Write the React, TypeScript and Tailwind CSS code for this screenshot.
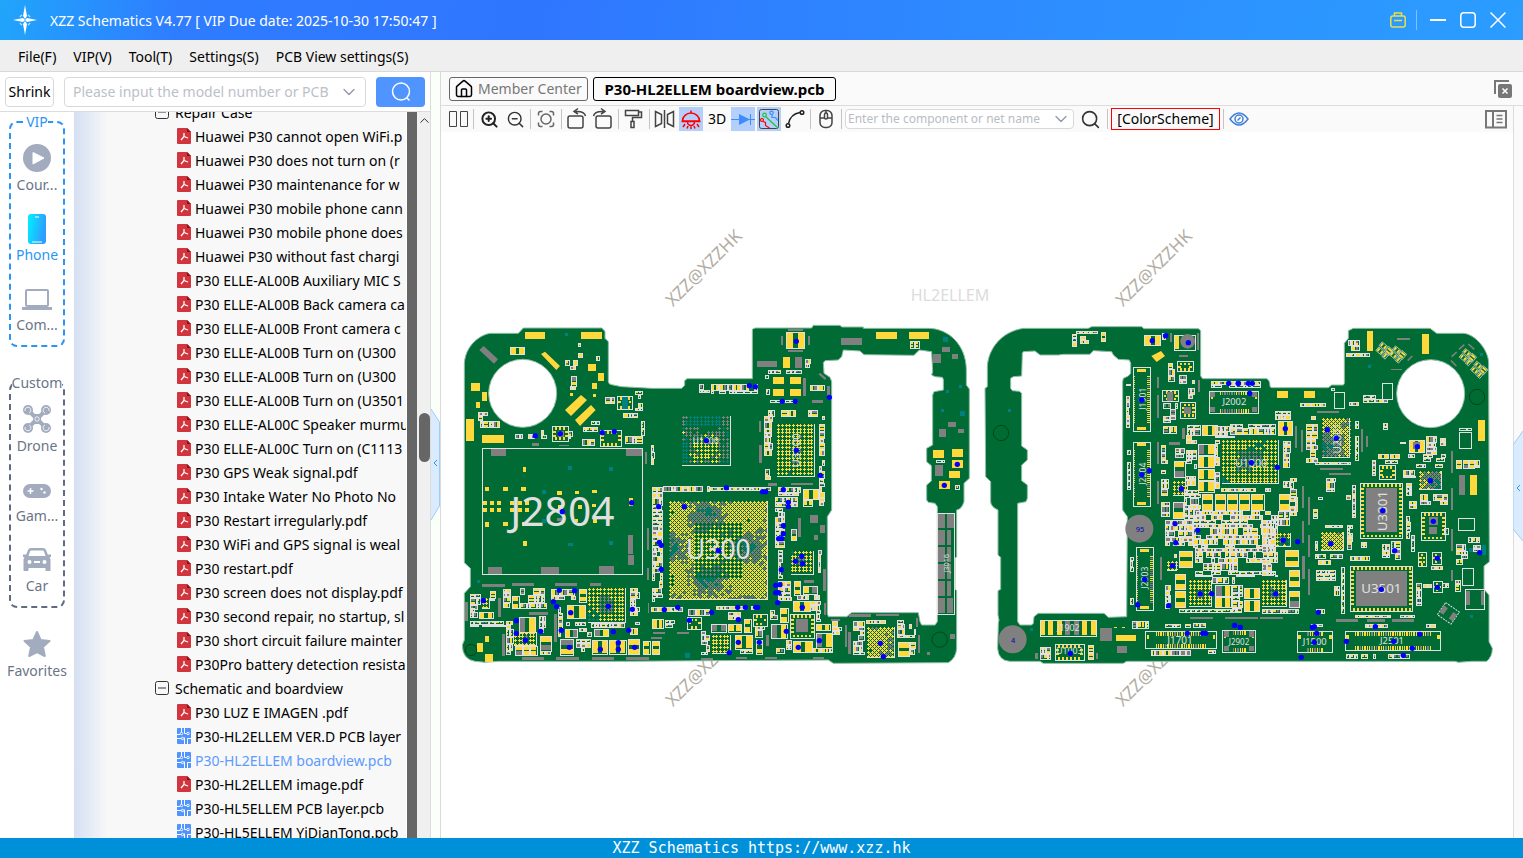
import { ReactNode } from "react";
import { ChevronDown, ChevronUp, House, Search, ZoomIn, ZoomOut } from "lucide-react";

const MENUS = ["File(F)", "VIP(V)", "Tool(T)", "Settings(S)", "PCB View settings(S)"];

const REPAIR_FILES = [
  "Huawei P30 cannot open WiFi.p",
  "Huawei P30 does not turn on (r",
  "Huawei P30 maintenance for w",
  "Huawei P30 mobile phone cann",
  "Huawei P30 mobile phone does",
  "Huawei P30 without fast chargi",
  "P30 ELLE-AL00B Auxiliary MIC S",
  "P30 ELLE-AL00B Back camera ca",
  "P30 ELLE-AL00B Front camera c",
  "P30 ELLE-AL00B Turn on (U300",
  "P30 ELLE-AL00B Turn on (U300",
  "P30 ELLE-AL00B Turn on (U3501",
  "P30 ELLE-AL00C Speaker murmu",
  "P30 ELLE-AL00C Turn on (C1113",
  "P30 GPS Weak signal.pdf",
  "P30 Intake Water No Photo No",
  "P30 Restart irregularly.pdf",
  "P30 WiFi and GPS signal is weal",
  "P30 restart.pdf",
  "P30 screen does not display.pdf",
  "P30 second repair, no startup, sl",
  "P30 short circuit failure mainter",
  "P30Pro battery detection resista",
];

const BOARD_FILES = [
  { name: "P30 LUZ E IMAGEN .pdf", type: "pdf" },
  { name: "P30-HL2ELLEM VER.D PCB layer", type: "pcb" },
  { name: "P30-HL2ELLEM boardview.pcb", type: "pcb" },
  { name: "P30-HL2ELLEM image.pdf", type: "pdf" },
  { name: "P30-HL5ELLEM PCB layer.pcb", type: "pcb" },
  { name: "P30-HL5ELLEM YiDianTong.pcb", type: "pcb" },
];

const ACTIVE_FILE = "P30-HL2ELLEM boardview.pcb";

/* ---------- icons ---------- */

function Logo() {
  return (
    <svg viewBox="0 0 26 30" className="h-[30px] w-[26px]" fill="#fff">
      <path d="M13 0l2 11-2 3-2-3zM13 30l2-11-2-3-2 3zM1 15l10-2 2 2-2 2zM25 15l-10-2-2 2 2 2z" />
      <g fill="none" stroke="#bfe3ff" strokeWidth="1.4">
        <path d="M8 12a6 6 0 0 1 2-2M16 10a6 6 0 0 1 2 2M18 18a6 6 0 0 1-2 2M10 20a6 6 0 0 1-2-2" />
      </g>
    </svg>
  );
}

function PdfIcon() {
  return (
    <svg viewBox="0 0 14 16" className="h-4 w-3.5 shrink-0">
      <path d="M1 0h9l4 4v11a1 1 0 0 1-1 1H1a1 1 0 0 1-1-1V1a1 1 0 0 1 1-1z" fill="#d2353e" />
      <path d="M10 0l4 4h-4z" fill="#8f1019" />
      <path d="M7 5v3.500L4 12M7 8.500L11 10" fill="none" stroke="#fff" strokeWidth="1.300" />
    </svg>
  );
}

function PcbIcon() {
  return (
    <svg viewBox="0 0 14 16" className="h-4 w-3.5 shrink-0">
      <rect width="14" height="16" rx="1" fill="#4f94ff" />
      <g fill="none" stroke="#fff" strokeWidth="1">
        <path d="M4.500 0v4M7.500 0v5.500h2M0 6.500h3M0 10.500h4.500M7.500 16v-6.500M10.500 16v-5.500h3.500" />
        <circle cx="4.500" cy="5.500" r="1.200" />
        <circle cx="11" cy="5.500" r="1.200" />
        <circle cx="5.500" cy="10.500" r="1.200" />
      </g>
    </svg>
  );
}

function CourseIcon() {
  return (
    <svg viewBox="0 0 28 28" className="size-7">
      <circle cx="14" cy="14" r="14" fill="#a3abbf" />
      <path d="M10 8.500l11 5.500-11 6z" fill="#fff" stroke="#fff" strokeLinejoin="round" />
    </svg>
  );
}

function PhoneIcon() {
  return (
    <svg viewBox="0 0 28 32" className="h-8 w-7">
      <defs>
        <linearGradient id="phone" x1="0" y1="0" x2="1" y2="0.3">
          <stop offset="0" stopColor="#00f2ff" />
          <stop offset="1" stopColor="#2f9cff" />
        </linearGradient>
      </defs>
      <rect x="5" y="2" width="18" height="30" rx="3" fill="url(#phone)" />
      <path d="M12 5h4M9 30h10" stroke="#fff" strokeWidth="1" />
    </svg>
  );
}

function LaptopIcon() {
  return (
    <svg viewBox="0 0 30 28" className="h-7 w-[30px]" fill="none" stroke="#a3abbf">
      <rect x="4" y="6" width="22" height="16" rx="1" strokeWidth="2" />
      <path d="M0 24.500h30" strokeWidth="3" />
    </svg>
  );
}

function DroneIcon() {
  return (
    <svg viewBox="0 0 28 28" className="size-7">
      <g fill="#a3abbf">
        <circle cx="5" cy="5" r="5" />
        <circle cx="23" cy="5" r="5" />
        <circle cx="5" cy="23" r="5" />
        <circle cx="23" cy="23" r="5" />
        <rect x="10" y="9" width="8" height="10" rx="2" />
      </g>
      <path d="M5 5l18 18M23 5L5 23" stroke="#a3abbf" strokeWidth="4" />
      <g fill="none" stroke="#fff" strokeWidth="0.8">
        <path d="M2 6a3 3 0 1 1 4 2M26 6a3 3 0 1 0-4 2M2 22a3 3 0 1 0 4-2M26 22a3 3 0 1 1-4-2" />
        <circle cx="14" cy="14" r="2.200" />
      </g>
    </svg>
  );
}

function GameIcon() {
  return (
    <svg viewBox="0 0 28 28" className="size-7">
      <rect y="9" width="28" height="14" rx="7" fill="#a3abbf" />
      <path d="M4.500 16h6M7.500 13v6" stroke="#fff" strokeWidth="1.500" />
      <circle cx="18.500" cy="14" r="1.200" fill="#fff" />
      <circle cx="21.500" cy="17.500" r="1.200" fill="#fff" />
    </svg>
  );
}

function CarIcon() {
  return (
    <svg viewBox="0 0 28 28" className="size-7">
      <path
        fillRule="evenodd"
        fill="#a3abbf"
        d="M8 3h12c1.500 0 2.500.8 3 2l1.800 4.500H28V12h-1.500c.8 1 1 2 1 3v10c0 .6-.4 1-1 1h-3c-.6 0-1-.4-1-1v-2h-17v2c0 .6-.4 1-1 1h-3c-.6 0-1-.4-1-1V15c0-1 .2-2 1-3H0V9.500h3.200L5 5c.5-1.200 1.500-2 3-2zm.5 2.500c-.8 0-1.200.4-1.500 1L5.500 11h17L21 6.500c-.3-.6-.7-1-1.500-1zM6.500 15a2 2 0 1 0 0 4 2 2 0 0 0 0-4zm15 0a2 2 0 1 0 0 4 2 2 0 0 0 0-4zM11 16v2h6v-2z"
      />
    </svg>
  );
}

function StarIcon() {
  return (
    <svg viewBox="0 0 28 28" className="size-7">
      <path
        d="M14 2l3.600 8 8.900 1-6.600 5.900 1.900 9.100L14 22l-7.800 4 1.900-9.100L1.500 11l8.900-1z"
        fill="#a3abbf"
        stroke="#a3abbf"
        strokeWidth="2"
        strokeLinejoin="round"
      />
    </svg>
  );
}

function Glyph({ children, color = "#444" }: { children: ReactNode; color?: string }) {
  return (
    <svg viewBox="0 0 24 24" className="size-6" fill="none" stroke={color} strokeWidth="1.500">
      {children}
    </svg>
  );
}

/* ---------- board drawing ---------- */

type Rect = [number, number, number, number];
type Point = [number, number];

type Tile = {
  x: number;
  yellow: Rect[];
  gray: Rect[];
  teal: Rect[];
  boxes: Rect[];
  parts: Rect[];
  rings: Rect[];
  connectors: Rect[];
  clusters: Rect[];
  bgas: [number, number, number, number, number][];
  dots: Point[];
};

const LEFT_OUTLINE =
  "M28 130C32 75 75 45 105 40H190L205 24H440L450 34V55L460 65V185Q461 193 470 194L500 200 590 205H680L689 196V182L696 176H892V28L900 24H1070L1075 16H1155L1160 21H1225V25H1420C1480 25 1534 75 1534 150V195L1543 207V475L1527 490V545Q1520 568 1505 570V710L1500 715V808L1505 812V985Q1503 1015 1480 1028L1135 1030 1120 1020 765 1022 500 1024H130L90 1027 60 1024Q22 1018 22 975L28 960V820L46 800V745L28 728Z";
const LEFT_WINDOW =
  "M1165 90L1215 93 1227 104 1377 106 1393 90 1430 95 1433 155 1430 165 1440 170 1462 172 1465 178V210L1437 215 1433 225V375L1415 385V425L1429 437V483L1415 495V540L1420 547 1440 550 1447 560V905L1440 915H1400L1395 905 1390 878H1190L1175 890H1120L1117 880V590L1130 570V185L1125 172 1107 160 1105 128 1110 122 1150 120 1160 110Z";
const RIGHT_OUTLINE =
  "M1597 200V140C1600 85 1640 35 1705 25H1900L1910 20H2060L2067 26H2230L2237 32V168L2243 176H2435Q2445 180 2445 200L2450 203H2620L2630 195H2665L2668 190V70L2680 55V32L2695 25H2925L2945 40H3025C3060 42 3101 90 3101 130L3103 725 3087 738V808L3102 825V965L3112 985Q3112 1010 3095 1024H3050L3010 1027 3000 1024H2015L2005 1030H1765L1755 1024H1665Q1630 1022 1628 985L1630 910 1632 900 1629 885V812L1637 808V712L1629 705V570Q1607 560 1607 545V485L1592 470 1590 205Z";
const RIGHT_WINDOW =
  "M1705 95L1740 93 1755 105H1810L1825 103H1905L1915 92 1970 95 1975 105 1990 118 2023 120 2027 130V160L2020 168 2005 175 2003 185V570L2017 590 2015 890 1960 892 1947 880H1750L1737 890 1735 910 1730 915H1695L1688 905V550L1713 545 1717 535V495L1700 482V435L1717 420V390L1700 378V220L1693 214 1672 212 1667 205V175L1675 170 1700 168 1702 100Z";

const TILES: Tile[] = [
  {
    x: 0,
    yellow: [
      [210, 36, 60, 21], [378, 36, 63, 21], [48, 188, 27, 25], [81, 216, 15, 27], [63, 246, 12, 18],
      [33, 297, 24, 66], [81, 345, 66, 24], [399, 132, 24, 21], [429, 159, 18, 24], [411, 189, 15, 18],
      [204, 441, 9, 15], [90, 501, 12, 12], [144, 501, 15, 12], [198, 500, 15, 13], [82, 543, 14, 12],
      [105, 543, 12, 12], [126, 543, 12, 12], [165, 543, 12, 12], [188, 543, 12, 12], [210, 543, 12, 12],
      [82, 564, 14, 12], [105, 564, 12, 12], [126, 564, 12, 12], [165, 564, 12, 12], [188, 564, 12, 12],
      [210, 564, 12, 12], [90, 606, 12, 15], [144, 606, 15, 12], [200, 606, 12, 12], [306, 513, 15, 12],
      [360, 513, 12, 9], [411, 510, 15, 9], [308, 555, 14, 12], [369, 555, 12, 12], [411, 552, 12, 9],
      [414, 597, 12, 12], [360, 597, 10, 10], [522, 534, 12, 24], [204, 663, 12, 15], [90, 948, 12, 18],
      [66, 969, 18, 27], [90, 1002, 24, 24], [345, 219, 9, 9], [414, 222, 9, 9],
    ],
    gray: [
      [108, 385, 45, 23], [513, 385, 48, 23], [99, 741, 42, 21], [258, 741, 54, 21], [432, 738, 45, 24],
      [519, 645, 15, 57], [519, 705, 18, 30], [306, 594, 15, 9], [231, 369, 21, 9], [312, 375, 30, 3],
      [570, 396, 6, 36], [576, 624, 6, 66], [576, 744, 6, 36], [81, 792, 69, 9], [171, 789, 66, 9],
      [300, 789, 66, 9], [405, 789, 33, 9], [30, 846, 9, 57], [129, 834, 9, 57], [222, 876, 57, 9],
      [297, 882, 9, 84], [141, 942, 9, 66], [201, 1011, 66, 9], [303, 1011, 69, 9], [411, 1011, 66, 9],
      [513, 1011, 69, 9], [594, 936, 36, 6], [666, 936, 36, 6], [588, 951, 33, 6], [738, 1014, 36, 6],
      [579, 849, 3, 30], [309, 333, 18, 18],
    ],
    teal: [
      [339, 438, 12, 12], [462, 441, 12, 12], [261, 510, 12, 12], [261, 597, 12, 12], [462, 663, 12, 12],
      [339, 669, 15, 9], [501, 231, 18, 36], [66, 780, 9, 9], [690, 999, 15, 15], [331, 40, 7, 7],
    ],
    boxes: [[82, 385, 481, 379]],
    parts: [
      [166, 82, 42, 22], [337, 856, 55, 40], [192, 892, 50, 45], [255, 948, 35, 45], [315, 957, 40, 48],
      [413, 960, 45, 42], [463, 960, 50, 42], [521, 958, 33, 45], [565, 963, 20, 40], [592, 963, 22, 40],
      [592, 898, 32, 27], [350, 170, 15, 28], [72, 877, 42, 18], [172, 828, 20, 38], [372, 808, 22, 38],
      [330, 928, 38, 24], [418, 928, 42, 22], [182, 978, 20, 28], [204, 978, 20, 28], [226, 978, 20, 28],
    ],
    rings: [[291, 319, 50, 44], [487, 229, 45, 40], [436, 330, 64, 50], [698, 893, 42, 36]],
    connectors: [],
    clusters: [
      [330, 122, 40, 32], [370, 70, 16, 48], [385, 108, 50, 18], [345, 200, 22, 12], [70, 277, 30, 28],
      [75, 303, 62, 30], [180, 342, 62, 22], [258, 330, 18, 34], [340, 335, 14, 24], [450, 232, 32, 34],
      [540, 213, 24, 62], [505, 280, 45, 16], [558, 305, 12, 45], [385, 322, 45, 14], [382, 357, 45, 24],
      [510, 350, 60, 26], [588, 375, 12, 65], [408, 303, 28, 12], [707, 193, 60, 28], [141, 100, 20, 9],
      [46, 822, 32, 50], [45, 865, 24, 32], [105, 815, 20, 30], [47, 903, 106, 20], [145, 808, 24, 62],
      [196, 805, 82, 50], [196, 850, 82, 22], [290, 808, 75, 40], [525, 805, 30, 112], [310, 850, 16, 110],
      [335, 906, 60, 12], [410, 910, 100, 16], [155, 905, 22, 100], [254, 890, 24, 50], [365, 957, 45, 44],
      [372, 925, 40, 26], [525, 925, 28, 22], [592, 502, 34, 350], [626, 500, 140, 20], [590, 862, 100, 16],
      [630, 900, 32, 28], [700, 868, 66, 22], [740, 935, 26, 70], [255, 993, 35, 14],
    ],
    bgas: [[680, 288, 147, 148, 0], [641, 543, 296, 295, 2], [400, 805, 112, 103, 1], [177, 935, 67, 40, 1], [80, 835, 24, 30, 1]],
    dots: [
      [241, 347], [316, 341], [442, 338], [478, 335], [322, 575], [530, 548], [85, 842], [313, 811], [359, 812],
      [295, 845], [305, 860], [347, 878], [460, 859], [532, 868], [184, 902], [184, 940], [211, 961], [257, 934],
      [319, 931], [343, 982], [475, 935], [521, 931], [436, 988], [490, 968], [490, 988], [539, 982], [611, 560],
      [688, 560], [613, 667], [619, 676], [619, 748], [628, 869], [668, 862], [703, 901], [754, 362],
    ],
  },
  {
    x: 765,
    yellow: [
      [498, 36, 63, 21], [597, 36, 60, 21], [219, 111, 21, 33], [189, 171, 33, 21], [240, 171, 33, 21],
      [189, 207, 33, 21], [240, 207, 33, 21], [669, 390, 33, 24], [726, 387, 33, 24], [726, 420, 33, 24],
      [717, 453, 33, 21], [687, 483, 33, 24],
    ],
    gray: [
      [141, 123, 60, 18], [254, 111, 21, 33], [393, 54, 63, 20], [234, 28, 45, 5], [234, 90, 45, 5],
      [213, 48, 5, 26], [295, 48, 5, 26], [696, 81, 24, 15], [669, 102, 24, 27], [726, 102, 18, 15],
      [714, 306, 24, 15], [687, 327, 21, 24], [744, 327, 18, 12], [675, 435, 24, 33], [279, 174, 9, 54],
      [351, 198, 9, 39], [306, 240, 33, 9], [147, 303, 6, 33], [147, 375, 9, 54], [174, 489, 27, 9],
      [243, 489, 66, 6], [300, 585, 24, 24], [330, 615, 15, 24], [312, 645, 12, 15], [264, 594, 9, 57],
      [339, 747, 9, 66], [282, 780, 30, 9], [342, 849, 6, 36], [417, 882, 66, 9], [498, 882, 69, 6],
      [414, 936, 9, 66], [405, 915, 6, 66], [168, 945, 9, 33], [363, 897, 27, 6], [618, 894, 6, 27],
      [624, 945, 6, 54], [165, 1011, 36, 6], [78, 1011, 33, 6], [309, 1011, 33, 6], [258, 897, 37, 38],
      [682, 580, 24, 45], [711, 580, 20, 45], [682, 629, 24, 46], [711, 629, 12, 46], [682, 681, 24, 46],
      [711, 681, 12, 46], [682, 731, 24, 46], [711, 731, 12, 46], [682, 783, 24, 46], [711, 783, 12, 46],
      [682, 834, 24, 45], [711, 834, 18, 45], [720, 942, 15, 15], [651, 996, 9, 9],
    ],
    teal: [[699, 51, 15, 15], [749, 272, 16, 16], [748, 196, 8, 8], [694, 268, 7, 7], [709, 211, 7, 7]],
    boxes: [[681, 579, 53, 305]],
    parts: [
      [228, 38, 56, 48], [280, 507, 46, 32], [75, 946, 53, 41], [183, 913, 48, 42], [250, 965, 58, 32],
      [318, 940, 50, 44], [564, 966, 35, 44], [252, 785, 20, 40], [280, 800, 42, 22], [250, 845, 52, 30],
      [5, 912, 45, 24], [55, 912, 40, 24], [103, 897, 20, 40], [280, 542, 28, 16], [212, 865, 22, 42],
      [320, 912, 40, 20], [245, 627, 14, 34], [138, 960, 20, 42],
    ],
    rings: [[241, 883, 73, 72], [130, 883, 42, 36]],
    connectors: [],
    clusters: [
      [4, 192, 140, 30], [175, 152, 102, 10], [285, 117, 22, 28], [165, 165, 12, 14], [170, 208, 14, 20],
      [300, 197, 45, 22], [180, 240, 90, 9], [175, 270, 155, 28], [163, 290, 28, 120], [328, 290, 18, 270],
      [165, 448, 22, 34], [0, 502, 185, 18], [204, 502, 70, 28], [196, 532, 70, 30], [196, 564, 30, 124],
      [205, 690, 16, 90], [204, 785, 44, 60], [248, 825, 84, 22], [300, 845, 34, 34], [180, 870, 28, 30],
      [320, 870, 14, 36], [366, 905, 30, 72], [20, 860, 130, 14], [55, 878, 40, 24], [430, 905, 36, 100],
      [470, 900, 90, 14], [562, 900, 58, 56], [600, 967, 20, 45], [600, 65, 30, 22], [735, 485, 20, 25],
      [325, 690, 12, 70], [135, 920, 32, 36], [200, 985, 30, 18], [310, 985, 60, 16], [90, 990, 40, 12],
      [228, 960, 20, 30], [678, 421, 28, 8],
    ],
    bgas: [[202, 312, 112, 157, 1], [242, 693, 69, 70, 1], [470, 922, 83, 90, 3], [5, 945, 57, 55, 1]],
    dots: [
      [118, 197], [136, 200], [259, 64], [358, 232], [217, 244], [256, 244], [259, 391], [331, 466], [49, 503],
      [158, 515], [167, 515], [220, 509], [235, 547], [235, 560], [220, 617], [220, 641], [206, 656], [215, 656],
      [25, 692], [275, 709], [256, 724], [278, 731], [214, 749], [197, 796], [210, 794], [197, 818], [206, 818],
      [203, 848], [277, 862], [83, 862], [106, 862], [137, 862], [143, 862], [5, 877], [85, 899], [229, 934],
      [85, 967], [148, 967], [58, 998], [265, 982], [328, 962], [511, 970], [520, 1010], [742, 433], [703, 496],
    ],
  },
  {
    x: 1575,
    yellow: [
      [408, 945, 60, 18], [183, 903, 12, 43], [204, 903, 14, 43], [232, 903, 14, 43], [306, 903, 14, 43],
      [333, 903, 14, 43], [585, 48, 12, 40], [402, 920, 8, 5], [427, 920, 8, 5],
    ],
    gray: [
      [360, 924, 36, 39], [411, 978, 30, 21], [256, 903, 14, 43], [282, 903, 14, 43], [570, 40, 6, 26],
      [597, 105, 27, 6], [651, 40, 6, 50], [531, 171, 6, 33], [531, 225, 6, 69], [531, 366, 6, 66],
      [531, 483, 6, 69], [540, 711, 6, 69], [567, 366, 33, 9], [606, 324, 9, 33], [654, 180, 6, 36],
      [630, 891, 69, 6], [735, 891, 100, 6], [165, 999, 9, 18], [348, 999, 6, 18], [560, 216, 20, 28],
      [612, 261, 21, 21], [691, 216, 15, 15], [691, 262, 15, 15], [815, 216, 15, 15], [815, 262, 15, 15],
      [731, 934, 16, 16], [731, 978, 16, 16], [806, 934, 16, 16], [806, 978, 16, 16],
    ],
    teal: [[84, 267, 9, 9], [150, 925, 8, 8]],
    boxes: [[180, 900, 170, 49], [583, 46, 62, 45]],
    parts: [
      [668, 317, 45, 30], [655, 372, 48, 33], [655, 410, 48, 33], [655, 447, 48, 33], [655, 483, 48, 33],
      [584, 423, 31, 50], [581, 547, 30, 48], [598, 693, 40, 50], [586, 763, 31, 45], [586, 815, 31, 48],
      [667, 523, 30, 48], [706, 523, 30, 48], [742, 523, 30, 48], [707, 797, 46, 32], [707, 831, 46, 32],
      [494, 47, 48, 29], [778, 523, 30, 48], [814, 523, 38, 48], [363, 37, 14, 28],
    ],
    rings: [[548, 210, 48, 34], [602, 248, 45, 46], [592, 125, 47, 30], [226, 973, 86, 49]],
    connectors: [
      [460, 143, 51, 191], [460, 367, 51, 192], [469, 683, 51, 188], [497, 934, 212, 52], [689, 213, 146, 67],
      [728, 931, 98, 67],
    ],
    clusters: [
      [277, 42, 16, 42], [290, 33, 70, 10], [300, 50, 28, 30], [440, 180, 14, 20], [438, 230, 14, 96],
      [441, 390, 12, 16], [441, 428, 12, 82], [450, 712, 12, 44], [450, 836, 12, 20], [548, 40, 14, 30],
      [565, 130, 22, 62], [597, 165, 50, 35], [625, 205, 22, 34], [550, 250, 45, 60], [550, 320, 42, 24],
      [623, 315, 40, 34], [618, 345, 35, 110], [705, 320, 60, 36], [545, 365, 22, 165], [587, 385, 30, 30],
      [705, 360, 16, 150], [615, 470, 35, 30], [612, 510, 52, 90], [545, 547, 30, 50], [640, 575, 255, 26],
      [640, 600, 255, 26], [640, 625, 255, 60], [645, 685, 250, 88], [555, 600, 85, 80], [458, 905, 55, 26],
      [535, 912, 100, 12], [640, 910, 40, 14], [515, 992, 120, 20], [640, 992, 70, 10], [557, 797, 18, 70],
      [598, 867, 170, 18], [697, 772, 70, 20], [693, 184, 150, 20], [180, 982, 35, 38], [325, 977, 18, 48],
      [725, 505, 150, 12], [557, 702, 36, 14], [757, 797, 34, 84],
    ],
    bgas: [[580, 483, 43, 43, 1], [628, 780, 67, 80, 1], [727, 360, 168, 130, 1], [562, 722, 28, 28, 1]],
    dots: [
      [517, 62], [557, 47], [625, 68], [485, 240], [485, 464], [508, 452], [604, 506], [585, 611], [653, 631],
      [587, 668], [578, 737], [494, 778], [473, 854], [566, 857], [661, 821], [695, 821], [746, 190], [775, 190],
      [622, 940], [668, 940], [677, 940], [271, 1000], [764, 916], [781, 922],
    ],
  },
  {
    x: 2325,
    yellow: [
      [411, 33, 18, 60], [576, 42, 21, 60], [744, 300, 21, 63], [141, 213, 33, 21], [222, 213, 33, 21],
      [720, 465, 21, 60],
    ],
    gray: [
      [408, 504, 93, 132], [378, 753, 153, 105], [687, 465, 18, 60], [597, 592, 26, 22], [597, 622, 24, 20],
      [501, 54, 39, 5], [483, 147, 33, 4], [195, 318, 6, 66], [213, 330, 6, 66], [261, 273, 66, 6],
      [270, 444, 69, 6], [297, 459, 66, 6], [393, 327, 6, 69], [408, 348, 6, 33], [663, 393, 6, 66],
      [663, 504, 6, 66], [663, 627, 6, 66], [663, 750, 6, 33], [216, 498, 6, 66], [234, 531, 6, 84],
      [216, 603, 6, 66], [216, 708, 9, 69], [234, 645, 6, 66], [234, 747, 6, 78], [318, 897, 66, 9],
      [411, 897, 54, 9], [486, 897, 66, 9], [90, 891, 69, 6], [709, 812, 10, 42], [752, 812, 10, 42],
      [550, 365, 20, 22],
    ],
    teal: [[414, 135, 10, 10], [700, 683, 12, 12], [718, 683, 12, 14], [757, 676, 12, 28], [720, 885, 9, 9], [750, 100, 8, 8]],
    boxes: [[313, 217, 30, 48], [457, 190, 30, 48], [687, 336, 38, 50], [685, 595, 48, 36], [697, 745, 33, 50], [706, 808, 58, 60]],
    parts: [
      [148, 523, 30, 48], [167, 692, 38, 48], [178, 752, 30, 48], [178, 813, 30, 50], [43, 806, 46, 30],
      [43, 842, 46, 33], [145, 305, 42, 42], [445, 402, 30, 14], [480, 402, 28, 14], [680, 422, 15, 24],
      [700, 422, 15, 24], [717, 422, 16, 24], [537, 360, 46, 38],
    ],
    rings: [
      [390, 490, 128, 165], [360, 739, 188, 136], [574, 577, 73, 84], [447, 436, 50, 42], [607, 698, 28, 34],
      [610, 785, 26, 32], [565, 698, 24, 42],
    ],
    connectors: [[345, 934, 287, 58], [202, 934, 106, 64]],
    clusters: [
      [0, 183, 105, 22], [0, 312, 138, 38], [137, 273, 48, 28], [160, 348, 24, 160], [182, 475, 24, 120],
      [145, 575, 35, 45], [98, 600, 34, 170], [355, 62, 42, 32], [350, 100, 70, 16], [305, 205, 40, 10],
      [210, 250, 85, 14], [358, 247, 32, 14], [400, 225, 38, 26], [435, 238, 42, 12], [230, 290, 35, 140],
      [377, 292, 10, 132], [255, 427, 110, 9], [445, 420, 64, 12], [428, 420, 12, 50], [290, 475, 28, 42],
      [265, 510, 16, 30], [350, 525, 14, 20], [368, 495, 12, 100], [250, 567, 15, 30], [510, 350, 24, 24],
      [588, 348, 34, 58], [630, 355, 20, 30], [535, 402, 24, 14], [580, 402, 70, 24], [520, 452, 40, 24],
      [560, 432, 80, 12], [530, 490, 18, 40], [570, 522, 85, 38], [537, 545, 30, 24], [530, 590, 14, 80],
      [545, 645, 12, 55], [352, 615, 18, 80], [285, 617, 55, 8], [255, 665, 10, 28], [255, 703, 92, 14],
      [265, 722, 55, 14], [258, 750, 60, 34], [458, 672, 24, 42], [485, 665, 32, 55], [605, 740, 35, 14],
      [558, 790, 18, 70], [580, 792, 28, 14], [638, 790, 20, 14], [680, 650, 34, 85], [716, 652, 50, 22],
      [730, 676, 24, 22], [677, 782, 16, 40], [360, 710, 75, 14], [333, 742, 12, 140], [312, 800, 18, 34],
      [260, 847, 26, 36], [375, 886, 180, 9], [230, 913, 50, 9], [405, 913, 70, 12], [590, 913, 30, 12],
      [350, 1004, 200, 13], [393, 667, 24, 20], [687, 325, 40, 8], [735, 422, 16, 24], [460, 310, 16, 20],
      [643, 625, 14, 36], [98, 868, 110, 14],
    ],
    bgas: [
      [137, 638, 45, 42, 1], [97, 780, 72, 80, 1], [275, 295, 84, 117, 3], [272, 635, 69, 57, 3],
      [567, 452, 68, 57, 3],
    ],
    dots: [
      [25, 190], [55, 190], [67, 190], [59, 220], [166, 326], [292, 329], [319, 355], [64, 428], [142, 442],
      [562, 380], [601, 482], [458, 572], [610, 604], [160, 661], [203, 665], [302, 671], [494, 692], [622, 715],
      [749, 698], [622, 802], [454, 808], [137, 821], [265, 877], [13, 916], [31, 922], [247, 922], [253, 920],
      [260, 940], [253, 967], [349, 964], [436, 920], [569, 943], [491, 964], [547, 985], [520, 1006], [214, 1012],
    ],
  },
];

function createRandom(seed: number) {
  let state = seed;
  return () => {
    state = (state * 1664525 + 1013904223) % 4294967296;
    return state / 4294967296;
  };
}

const rectPath = (x: number, y: number, w: number, h: number) => `M${x} ${y}h${w}v${h}h${-w}z`;

// Collects every shape of a tile into one path per colour.
function buildTile(tile: Tile) {
  const random = createRandom(tile.x + 7);
  const paths = { outline: "", yellow: "", gray: "", teal: "" };

  tile.yellow.forEach((r) => (paths.yellow += rectPath(...r)));
  tile.gray.forEach((r) => (paths.gray += rectPath(...r)));
  tile.teal.forEach((r) => (paths.teal += rectPath(...r)));
  tile.boxes.forEach((r) => (paths.outline += rectPath(...r)));

  const addPart = (x: number, y: number, w: number, h: number, vertical: boolean, grayShare: number) => {
    paths.outline += rectPath(x, y, w, h);
    const first = random() < grayShare ? "gray" : "yellow";
    const second = random() < grayShare ? "gray" : "yellow";
    if (vertical) {
      const pad = Math.round(h * 0.34);
      paths[first] += rectPath(x + 2, y + 2, w - 4, pad);
      paths[second] += rectPath(x + 2, y + h - pad - 2, w - 4, pad);
    } else {
      const pad = Math.round(w * 0.34);
      paths[first] += rectPath(x + 2, y + 2, pad, h - 4);
      paths[second] += rectPath(x + w - pad - 2, y + 2, pad, h - 4);
    }
  };

  tile.parts.forEach(([x, y, w, h]) => addPart(x, y, w, h, h > w, 0.12));

  tile.clusters.forEach(([x, y, w, h]) => {
    let top = y;
    while (top < y + h - 6) {
      const rowHeight = Math.min(12 + Math.floor(random() * 3) * 5, y + h - top);
      let left = x;
      while (left < x + w - 6) {
        const width = Math.min(10 + Math.floor(random() * 4) * 5, x + w - left);
        if (random() < 0.84 && width > 7 && rowHeight > 5) {
          addPart(left, top, width - 3, rowHeight - 3, rowHeight > width, 0.38);
        }
        left += width;
      }
      top += rowHeight;
    }
  });

  tile.rings.forEach(([x, y, w, h]) => {
    paths.outline += rectPath(x, y, w, h);
    for (let px = x + 9; px < x + w - 10; px += 12) {
      paths.yellow += rectPath(px, y + 3, 6, 8) + rectPath(px, y + h - 11, 6, 8);
    }
    for (let py = y + 14; py < y + h - 14; py += 12) {
      paths.yellow += rectPath(x + 3, py, 8, 6) + rectPath(x + w - 11, py, 8, 6);
    }
  });

  tile.connectors.forEach(([x, y, w, h]) => {
    paths.outline += rectPath(x, y, w, h);
    if (h > w) {
      paths.yellow += rectPath(x + 12, y + 3, w - 24, 9) + rectPath(x + 12, y + h - 12, w - 24, 9);
      for (let py = y + 24; py < y + h - 24; py += 6) {
        const key = random() < 0.7 ? "yellow" : "gray";
        paths[key] += rectPath(x + 1, py, 5, 3) + rectPath(x + w - 10, py, 9, 3);
      }
    } else {
      for (let px = x + 30; px < x + w - 30; px += 7) {
        const key = random() < 0.75 ? "yellow" : "gray";
        paths[key] += rectPath(px, y + 2, 4, 11) + rectPath(px, y + h - 13, 4, 11);
      }
      paths.yellow += rectPath(x + 3, y + 12, 8, 12) + rectPath(x + w - 11, y + 12, 8, 12);
    }
  });

  // kind: 0 = mostly teal, 1 = yellow grid, 2 = lattice with an open middle, 3 = lattice
  tile.bgas.forEach(([x, y, w, h, kind]) => {
    paths.outline += `M${x} ${y + h}h${w}v${-h}`;
    const pitch = kind > 1 ? 6 : 11;
    const columns = Math.floor((w - 6) / pitch);
    const rows = Math.floor((h - 6) / pitch);
    for (let row = 0; row <= rows; row++) {
      for (let column = 0; column <= columns; column++) {
        const px = x + 4 + column * pitch;
        const py = y + 4 + row * pitch;
        const cx = column / columns - 0.5;
        const cy = row / rows - 0.5;
        const inner = Math.abs(cx) < 0.26 && Math.abs(cy) < 0.3;
        const wave = Math.sin(px / 37 + tile.x) * Math.cos(py / 31) + random() * 0.9;
        let key: "yellow" | "gray" | "teal" = "yellow";
        if (kind === 0) key = wave > 0.9 ? "yellow" : wave > 0.3 ? "gray" : "teal";
        else if (kind === 1) key = inner && wave > 0.3 ? "gray" : wave > 1.4 ? "teal" : "yellow";
        else key = wave > 1.4 ? "teal" : wave > 0.65 ? "gray" : "yellow";
        if (kind === 0 && inner && wave < 0.3) continue;
        if (kind > 1 && (row + column) % 2) continue;
        if (kind === 2 && inner && row % 2) continue;
        if (kind > 1 && wave < -0.75) continue;
        paths[key] += `M${px - 4} ${py - 1}h3v-3h3v3h3v3h-3v3h-3v-3h-3z`;
      }
    }
  });

  return paths;
}

const BUILT_TILES = TILES.map((tile) => ({ tile, paths: buildTile(tile) }));

function BoardLabel({ x, y, size, children, vertical = false }: { x: number; y: number; size: number; children: string; vertical?: boolean }) {
  return (
    <text
      x={x}
      y={y}
      fontSize={size}
      fill="#e0e0e0"
      textAnchor="middle"
      dominantBaseline="central"
      transform={vertical ? `rotate(-90 ${x} ${y})` : undefined}
    >
      {children}
    </text>
  );
}

function BoardCanvas() {
  return (
    <svg viewBox="-42 -564 3216 2118" className="h-full w-full font-['Noto_Sans',sans-serif]" role="img" aria-label="HL2ELLEM boardview">
      {[
        [744, -158],
        [2094, -158],
        [744, 1042],
        [2094, 1042],
      ].map(([x, y]) => (
        <text
          key={`${x}-${y}`}
          x={x}
          y={y}
          fontSize="52"
          fill="#b3aea4"
          textAnchor="middle"
          dominantBaseline="central"
          transform={`rotate(-45 ${x} ${y})`}
        >
          XZZ@XZZHK
        </text>
      ))}
      <text x="1485" y="-76" fontSize="48" fill="#dcdcdc" textAnchor="middle" dominantBaseline="central">
        HL2ELLEM
      </text>

      <g fill="#006b35" stroke="#8dbfa4" strokeWidth="3" fillRule="evenodd">
        <path d={`${LEFT_OUTLINE} ${LEFT_WINDOW} M101 220a102 102 0 1 0 204 0a102 102 0 1 0 -204 0`} />
        <path d={`${RIGHT_OUTLINE} ${RIGHT_WINDOW} M2825 221a102 102 0 1 0 204 0a102 102 0 1 0 -204 0`} />
      </g>

      <g fill="#ffd83c">
        <path d="M258 102L270 95 315 138 304 150ZM330 270L378 225 396 240 348 288ZM360 300L408 255 422 270 375 318Z" />
        <path d="M2089 108L2118 93 2130 108 2105 126Z" />
      </g>
      <path d="M73 90L86 78 129 118 117 131ZM1090 163L1096 159 1114 174 1110 180Z" fill="#808080" />

      {BUILT_TILES.map(({ tile, paths }) => (
        <g key={tile.x} transform={`translate(${tile.x} 0)`} shapeRendering="crispEdges">
          <path d={paths.yellow} fill="#ffd83c" />
          <path d={paths.gray} fill="#808080" />
          <path d={paths.teal} fill="#008080" />
          <path d={paths.outline} fill="none" stroke="#e0e0e0" strokeWidth="3" />
        </g>
      ))}

      {/* parts that sit at an angle by the camera openings */}
      {[
        [2788, 92],
        [2828, 104],
        [3038, 112],
        [3072, 150],
      ].map(([x, y]) => (
        <g key={x} transform={`translate(${x} ${y}) rotate(40)`} strokeWidth="2">
          <path d="M-20-14h6v10h-6zM-8-14h6v10h-6zM4-16h14v6h-14zM4-6h14v6h-14zM-18 4h6v10h-6zM-6 4h6v10h-6zM8 4h6v12h-6z" fill="#ffd83c" />
          <path d="M-22-16h22v14h-22zM2-18h18v20h-18zM-20 2h22v14h-22zM6 4h12v14h-12z" fill="none" stroke="#e0e0e0" />
        </g>
      ))}
      <path d="M2858 122L2872 108M2990 110L3005 96M3012 88L3028 74M2988 122L3004 138M3040 72L3058 88" stroke="#808080" strokeWidth="5" />
      <g transform="translate(2980 880) rotate(35)">
        <path d="M-25-22h50v44h-50z" fill="none" stroke="#e0e0e0" strokeWidth="3" strokeDasharray="6 3" />
        <path d="M-24-12h14v24h-14zM10-12h14v24h-14z" fill="#808080" />
      </g>

      <g fill="#808080">
        <circle cx="2053" cy="626" r="42" />
        <circle cx="1673" cy="958" r="42" />
        <circle cx="2198" cy="64" r="22" />
      </g>
      <g fill="none" stroke="#00480f" strokeWidth="3">
        <circle cx="48" cy="990" r="17" />
        <circle cx="1454" cy="959" r="23" />
        <circle cx="1638" cy="339" r="23" />
        <circle cx="3066" cy="231" r="23" />
      </g>

      <BoardLabel x={322} y={571} size={122}>J2804</BoardLabel>
      <BoardLabel x={790} y={686} size={79}>U300</BoardLabel>
      <BoardLabel x={752} y={362} size={26}>U1400</BoardLabel>
      <BoardLabel x={1023} y={391} size={34} vertical>U3100</BoardLabel>
      <BoardLabel x={1474} y={730} size={22} vertical>J3016</BoardLabel>
      <BoardLabel x={2063} y={236} size={26} vertical>J1901</BoardLabel>
      <BoardLabel x={2063} y={461} size={26} vertical>J2204</BoardLabel>
      <BoardLabel x={2071} y={773} size={26} vertical>J2903</BoardLabel>
      <BoardLabel x={1840} y={924} size={26}>J1902</BoardLabel>
      <BoardLabel x={1843} y={994} size={26}>U1003</BoardLabel>
      <BoardLabel x={2175} y={959} size={30}>J1701</BoardLabel>
      <BoardLabel x={2338} y={245} size={28}>J2002</BoardLabel>
      <BoardLabel x={2352} y={963} size={24}>J2902</BoardLabel>
      <BoardLabel x={2388} y={428} size={32}>U1800</BoardLabel>
      <BoardLabel x={2645} y={355} size={30} vertical>U2801</BoardLabel>
      <BoardLabel x={2782} y={573} size={40} vertical>U3301</BoardLabel>
      <BoardLabel x={2779} y={805} size={40}>U3501</BoardLabel>
      <BoardLabel x={2579} y={964} size={28}>J1500</BoardLabel>
      <BoardLabel x={2811} y={962} size={28}>J2501</BoardLabel>

      <g fill="#0000ff">
        {TILES.flatMap((tile) =>
          tile.dots.map(([x, y]) => <circle key={`${tile.x}-${x}-${y}`} cx={tile.x + x} cy={y} r="8" />)
        )}
      </g>
      <g fill="#0000b4" fontSize="22" textAnchor="middle">
        <text x="2055" y="636">95</text>
        <text x="1674" y="968">4</text>
      </g>
    </svg>
  );
}

/* ---------- panels ---------- */

function TitleBar() {
  return (
    <header className="flex h-10 shrink-0 items-center bg-[linear-gradient(100deg,#20a5fb_0%,#2f7cff_12%,#2f76ff_35%,#2d8eff_70%,#2b9dff_100%)] pl-3 pr-[13px] text-white">
      <Logo />
      <h1 className="ml-3 pt-0.5 text-sm">XZZ Schematics V4.77 [ VIP Due date: 2025-10-30 17:50:47 ]</h1>
      <div className="ml-auto flex items-center gap-1.5">
        <button aria-label="Toolbox" className="flex size-6 items-center justify-center">
          <svg viewBox="0 0 16 16" className="size-4" fill="none" stroke="#e6e04a" strokeWidth="1.500">
            <rect x="0.800" y="4" width="14.400" height="11" rx="2" />
            <path d="M4.500 4V1h7v3M4 8.500h8" />
          </svg>
        </button>
        <span className="mr-[3px] h-5 w-px bg-white/40" />
        <button aria-label="Minimize" className="flex size-6 items-center justify-center">
          <svg viewBox="0 0 16 16" className="size-4" stroke="currentColor" strokeWidth="2">
            <path d="M0 8h16" />
          </svg>
        </button>
        <button aria-label="Maximize" className="flex size-6 items-center justify-center">
          <svg viewBox="0 0 16 16" className="size-4" fill="none" stroke="currentColor" strokeWidth="1.500">
            <rect x="0.800" y="0.800" width="14.400" height="14.400" rx="3" />
          </svg>
        </button>
        <button aria-label="Close" className="flex size-6 items-center justify-center">
          <svg viewBox="0 0 16 16" className="size-4" stroke="currentColor" strokeWidth="1.500">
            <path d="M0.500 0.500l15 15M15.500 0.500l-15 15" />
          </svg>
        </button>
      </div>
    </header>
  );
}

function MenuBar() {
  return (
    <nav className="flex h-8 shrink-0 items-center gap-[17px] border-b border-[#d9d9d9] bg-[#efefef] pl-[18px] pt-0.5 text-sm text-black">
      {MENUS.map((menu) => (
        <button key={menu}>{menu}</button>
      ))}
    </nav>
  );
}

function SideItem({ label, icon, active = false }: { label: string; icon: ReactNode; active?: boolean }) {
  return (
    <button className={`flex h-[70px] w-full flex-col items-center gap-[3px] pt-3 text-sm/5 ${active ? "text-[#2b95f5]" : "text-[#6b7487]"}`}>
      <span className="flex h-7 items-center">{icon}</span>
      <span>{label}</span>
    </button>
  );
}

function CategoryRail() {
  return (
    <aside className="w-[74px] shrink-0 overflow-hidden bg-white">
      <fieldset className="mx-[9px] min-w-0 rounded-lg border-2 border-dashed border-[#2b95f5] pb-[3px]">
        <legend className="mx-auto text-sm/5 text-[#2b95f5]">VIP</legend>
        <SideItem label="Cour..." icon={<CourseIcon />} />
        <SideItem label="Phone" icon={<PhoneIcon />} active />
        <SideItem label="Com..." icon={<LaptopIcon />} />
      </fieldset>
      <fieldset className="mx-[9px] mt-[26px] min-w-0 rounded-lg border-2 border-dashed border-[#5f6b80] pb-[3px]">
        <legend className="mx-auto text-sm/5 text-[#6b7487]">Custom</legend>
        <SideItem label="Drone" icon={<DroneIcon />} />
        <SideItem label="Gam..." icon={<GameIcon />} />
        <SideItem label="Car" icon={<CarIcon />} />
      </fieldset>
      <div className="mt-2.5">
        <SideItem label="Favorites" icon={<StarIcon />} />
      </div>
    </aside>
  );
}

function FolderRow({ name }: { name: string }) {
  return (
    <button className="flex h-6 w-full items-center gap-1.5 whitespace-nowrap pl-[81px] text-left">
      <svg viewBox="0 0 14 14" className="size-3.5 shrink-0" fill="none" stroke="#333">
        <rect x="0.500" y="0.500" width="13" height="13" rx="2" />
        <path d="M3 7h8" />
      </svg>
      <span className="pt-0.5">{name}</span>
    </button>
  );
}

function FileRow({ name, type }: { name: string; type: string }) {
  return (
    <button
      className={`flex h-6 w-full items-center gap-1 whitespace-nowrap pl-[103px] text-left ${name === ACTIVE_FILE ? "text-[#5c9bff]" : "text-black"}`}
    >
      {type === "pdf" ? <PdfIcon /> : <PcbIcon />}
      <span className="pt-0.5">{name}</span>
    </button>
  );
}

function FileTree() {
  return (
    <div className="min-w-0 flex-1 overflow-hidden bg-[linear-gradient(90deg,#d5e0f2_0,#f8f8f8_34px)] text-sm text-black">
      <ul className="-mt-3">
        <li>
          <FolderRow name="Repair Case" />
          <ul>
            {REPAIR_FILES.map((name, index) => (
              <li key={index}>
                <FileRow name={name} type="pdf" />
              </li>
            ))}
          </ul>
        </li>
        <li>
          <FolderRow name="Schematic and boardview" />
          <ul>
            {BOARD_FILES.map((file) => (
              <li key={file.name}>
                <FileRow name={file.name} type={file.type} />
              </li>
            ))}
          </ul>
        </li>
      </ul>
    </div>
  );
}

function LeftPanel() {
  return (
    <section className="flex w-[431px] shrink-0 flex-col border-r border-[#dcdcdc]">
      <div className="flex h-10 shrink-0 items-center border-b border-[#dcdcdc] bg-white pl-[5px] text-sm">
        <button className="h-[30px] w-[49px] rounded border border-[#d9d9d9] text-black">Shrink</button>
        <div className="ml-2.5 flex h-[30px] w-[302px] items-center rounded border border-[#d9d9d9] px-2">
          <input
            aria-label="Model search"
            placeholder="Please input the model number or PCB"
            className="min-w-0 flex-1 outline-none placeholder:text-[#bcc0c8]"
          />
          <ChevronDown size={20} strokeWidth={1.5} className="-mr-0.5 text-[#8f97a3]" />
        </div>
        <button aria-label="Search model" className="ml-2.5 flex h-[30px] w-[49px] items-center justify-center rounded bg-[#4f94ff] text-white">
          <svg viewBox="0 0 20 20" className="size-5" fill="none" stroke="currentColor" strokeWidth="1.500">
            <circle cx="10" cy="9.500" r="8.500" />
            <path d="M16 16l2.500 2.500" />
          </svg>
        </button>
      </div>
      <div className="flex min-h-0 flex-1">
        <CategoryRail />
        <FileTree />
        <div className="ml-px w-[10px] shrink-0 bg-[#666]" />
        <div className="relative w-[13px] shrink-0 bg-[#f0f0f0]">
          <ChevronUp size={15} strokeWidth={1.5} className="mt-px text-[#222]" />
          <span className="absolute right-0 top-[301px] h-[49px] w-[11px] rounded-full bg-[#666]" />
        </div>
      </div>
    </section>
  );
}

function Divider() {
  return <span className="mx-px h-5 w-px shrink-0 bg-[#c4c4c4]" />;
}

function ToolButton({ label, active = false, children }: { label: string; active?: boolean; children: ReactNode }) {
  return (
    <button aria-label={label} className={`flex size-6 shrink-0 items-center justify-center ${active ? "bg-[#b5cffb]" : ""}`}>
      {children}
    </button>
  );
}

function BoardToolbar() {
  return (
    <div className="flex h-[26px] shrink-0 items-center gap-0.5 bg-[#fafafa] pl-[5px] pr-[5px] text-sm text-[#333]">
      <ToolButton label="Split view">
        <Glyph>
          <path d="M3.500 4.500h7v15h-7zM14.500 4.500h7v15h-7z" strokeWidth="1" />
        </Glyph>
      </ToolButton>
      <Divider />
      <ToolButton label="Zoom in">
        <ZoomIn size={19} strokeWidth={2.5} className="text-[#222]" />
      </ToolButton>
      <ToolButton label="Zoom out">
        <ZoomOut size={19} strokeWidth={1.8} />
      </ToolButton>
      <Divider />
      <ToolButton label="Fit">
        <Glyph color="#666">
          <circle cx="12" cy="12" r="5" />
          <path d="M4.500 8.500V6.500q0-2 2-2h2M15.500 4.500h2q2 0 2 2v2M19.500 15.500v2q0 2-2 2h-2M8.500 19.500h-2q-2 0-2-2v-2" />
        </Glyph>
      </ToolButton>
      <Divider />
      <ToolButton label="Rotate left">
        <Glyph>
          <rect x="3" y="9" width="15" height="12" rx="2" />
          <path d="M20.500 9q-1-5-10-4.500M13 1.500l-4 3 4 2.500" />
        </Glyph>
      </ToolButton>
      <ToolButton label="Rotate right">
        <Glyph>
          <rect x="5" y="9" width="15" height="12" rx="2" />
          <path d="M2.500 9q1-5 10-4.500M10 1.500l4 3-4 2.500" />
        </Glyph>
      </ToolButton>
      <Divider />
      <ToolButton label="Paint">
        <Glyph>
          <path d="M3.500 3.500h13v5h-13zM16.500 5h3v5.500h-9v4M9 14.500h3v6h-3z" />
        </Glyph>
      </ToolButton>
      <Divider />
      <ToolButton label="Mirror">
        <Glyph>
          <path d="M2.500 4.500v15l6-3v-9zM11.500 3v18M20.500 4.500v15l-6-3v-9z" />
        </Glyph>
      </ToolButton>
      <ToolButton label="Light" active>
        <Glyph color="#f00">
          <path d="M3.500 14a8.500 8 0 0 1 17 0zM2.500 14.500h19M12 6V3.500M8.500 15a3.500 3.500 0 0 0 7 0M6 17l-2 3M9 19l-1 2.500M12 19.500V22M15 19l1 2.500M18 17l2 3" />
        </Glyph>
      </ToolButton>
      <button className="w-6 shrink-0 text-black">3D</button>
      <ToolButton label="Diode" active>
        <Glyph color="#3f8cff">
          <path d="M0 12.500h24M19.500 7v11" strokeWidth="1" />
          <path d="M8 7v11l11-5.500z" fill="#3f8cff" stroke="none" />
        </Glyph>
      </ToolButton>
      <ToolButton label="Nets" active>
        <Glyph>
          <rect x="2.500" y="2.500" width="19" height="19" rx="2" strokeWidth="1" />
          <g strokeWidth="1.200">
            <path d="M8.500 9.500L21 21" stroke="#1fc23c" />
            <circle cx="7.500" cy="8" r="1.800" stroke="#1fc23c" />
            <path d="M15 7.500v3h3.500l2.500 3" stroke="#3f8cff" />
            <circle cx="14.500" cy="5.800" r="1.700" stroke="#3f8cff" />
            <path d="M6 14.500l2.500 1v3l4 2.500" stroke="#f00" />
            <circle cx="5" cy="13" r="1.500" stroke="#f00" />
          </g>
        </Glyph>
      </ToolButton>
      <ToolButton label="Curve">
        <Glyph color="#222">
          <circle cx="5" cy="18.500" r="1.800" />
          <circle cx="19" cy="5.500" r="1.800" />
          <path d="M5.500 16.500Q7.500 7 17 5.500" />
        </Glyph>
      </ToolButton>
      <Divider />
      <ToolButton label="Mouse">
        <Glyph>
          <rect x="6" y="3.500" width="12" height="17" rx="5" />
          <path d="M6 11h12M12 3.500v3" />
          <rect x="10.500" y="6" width="3" height="6" rx="1.500" fill="#fff" />
        </Glyph>
      </ToolButton>
      <Divider />
      <div className="flex h-5 w-[229px] shrink-0 items-center rounded-sm border border-[#d9d9d9] bg-white px-0.5 text-xs">
        <input
          aria-label="Component search"
          placeholder="Enter the component or net name"
          className="min-w-0 flex-1 outline-none placeholder:text-[#b7bcc5]"
        />
        <ChevronDown size={20} strokeWidth={1.5} className="text-[#8f97a3]" />
      </div>
      <button aria-label="Find component" className="flex h-6 w-7 shrink-0 items-center justify-center">
        <Search size={21} strokeWidth={1.8} />
      </button>
      <Divider />
      <button className="h-[22px] w-[109px] shrink-0 border border-[#f00] leading-5 text-black">[ColorScheme]</button>
      <Divider />
      <ToolButton label="Show">
        <Glyph color="#3f7fdc">
          <path d="M3 12q9-12 18 0-9 12-18 0z" />
          <circle cx="12" cy="12" r="4" />
          <path d="M10.500 13.500l3-3" />
        </Glyph>
      </ToolButton>
      <button aria-label="Side panel" className="ml-auto flex size-6 shrink-0 items-center justify-center">
        <Glyph color="#777">
          <path d="M2 4h20v16.500h-20zM9 4v16.500" strokeWidth="2" />
          <path d="M12.500 8.500h6M12.500 12h6M12.500 15.500h6" />
        </Glyph>
      </button>
    </div>
  );
}

function BoardPanel() {
  return (
    <section className="flex min-w-0 flex-1 flex-col border-l border-[#d9d9d9]">
      <div className="flex h-[34px] shrink-0 items-center border-b border-[#dcdcdc] bg-[#fafafa] px-2 text-sm">
        <button className="flex h-6 w-[139px] items-center gap-1 whitespace-nowrap rounded-[3px] border border-[#666] pl-1 text-[#777]">
          <House size={20} strokeWidth={1.8} className="shrink-0 text-black" />
          Member Center
        </button>
        <button className="ml-[5px] h-6 w-[243px] rounded-[3px] border border-black text-[15px] font-bold leading-5 text-black">
          P30-HL2ELLEM boardview.pcb
        </button>
        <button aria-label="Close all" className="ml-auto flex size-6 items-center justify-center">
          <svg viewBox="0 0 18 18" className="size-[18px]">
            <path d="M1 14V1h14" fill="none" stroke="#777" strokeWidth="2" />
            <rect x="4" y="4" width="14" height="14" rx="2" fill="#777" />
            <path d="M8.500 8.500l5 5M13.500 8.500l-5 5" stroke="#fff" strokeWidth="1.500" />
          </svg>
        </button>
      </div>
      <div className="flex min-h-0 flex-1">
        <div className="flex min-w-0 flex-1 flex-col">
          <BoardToolbar />
          <div className="min-h-0 flex-1 bg-white">
            <BoardCanvas />
          </div>
        </div>
        <div className="relative w-[10px] shrink-0 border-l border-[#dcdcdc] bg-[#fafafa]">
          <button aria-label="Expand right panel" className="absolute -left-px top-[325px]">
            <svg viewBox="0 0 10 110" className="h-[110px] w-[10px]" fill="none">
              <path d="M10 0L0 14v84l10 12" fill="#d9ebfd" stroke="#9ccdf7" />
              <path d="M7 54l-3 3 3 3" stroke="#2b95f5" />
            </svg>
          </button>
        </div>
      </div>
    </section>
  );
}

export default function App() {
  return (
    <div className="flex h-screen flex-col overflow-hidden bg-white font-['Noto_Sans',sans-serif]">
      <TitleBar />
      <MenuBar />
      <main className="flex min-h-0 flex-1">
        <LeftPanel />
        <div className="relative w-[9px] shrink-0 bg-[#fbfffa]">
          <button aria-label="Collapse left panel" className="absolute left-0 top-[337px]">
            <svg viewBox="0 0 9 111" className="h-[111px] w-[9px]" fill="none">
              <path d="M0 0l8.500 13v84L0 111" fill="#d9ebfd" stroke="#9ccdf7" />
              <path d="M6 51l-3 3 3 3" stroke="#2b95f5" />
            </svg>
          </button>
        </div>
        <BoardPanel />
      </main>
      <footer className="flex h-5 shrink-0 items-center justify-center bg-[#0090da] font-['DejaVu_Sans_Mono',monospace] text-[15px] text-white">
        XZZ Schematics https://www.xzz.hk
      </footer>
    </div>
  );
}
